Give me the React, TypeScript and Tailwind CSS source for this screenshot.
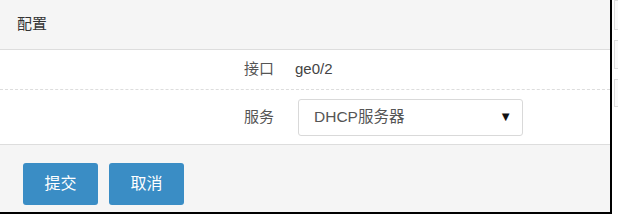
export default function App() {
  const font = { fontFamily: '"Liberation Sans", "Noto Sans CJK SC", sans-serif' };
  return (
    <div className="flex h-[220px] w-[618px] overflow-hidden bg-white text-[15px] text-[#555]" style={font}>
      <div className="flex h-[214px] w-[612px] shrink-0 flex-col border-r-2 border-b-2 border-black">
        <div className="flex h-[50px] items-center border-b border-[#dddddd] bg-[#f5f5f5] pl-[17px] text-[#333]">
          配置
        </div>
        <div className="flex h-[40px] items-center border-b border-dashed border-[#dddddd]">
          <div className="w-[274px] text-right">接口</div>
          <div className="pl-[21px] text-[#444]">ge0/2</div>
        </div>
        <div className="flex h-[55px] items-center border-b border-[#dddddd]">
          <div className="w-[274px] text-right">服务</div>
          <div className="ml-[24px] flex h-[37px] w-[225px] items-center justify-between rounded-[3px] border border-[#d9d9d9] bg-white pl-[15px] pr-[10px] text-[15.5px] text-[#555]">
            <span>DHCP服务器</span>
            <span className="text-[13px] text-[#111]">▼</span>
          </div>
        </div>
        <div className="flex flex-1 items-start gap-[11px] bg-[#f5f5f5] pl-[23px] pt-[18px]">
          <button className="h-[42px] w-[75px] rounded-[3px] bg-[#3a8dc5] text-[16px] text-white">提交</button>
          <button className="h-[42px] w-[75px] rounded-[3px] bg-[#3a8dc5] text-[16px] text-white">取消</button>
        </div>
      </div>
      <div className="flex flex-col gap-[10px] pl-[2px]">
        <div className="h-[30px] w-[20px] border border-[#dddddd] bg-[#fafafa]" />
        <div className="h-[29px] w-[20px] border border-[#dddddd] bg-[#fafafa]" />
        <div className="h-[28px] w-[20px] border border-[#dddddd] bg-[#fafafa]" />
      </div>
    </div>
  );
}
